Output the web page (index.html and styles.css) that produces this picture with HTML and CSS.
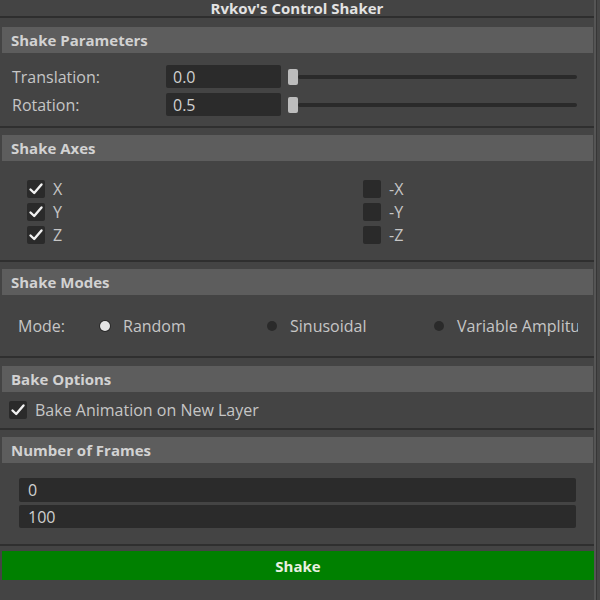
FILE: index.html
```html
<!DOCTYPE html>
<html lang="en">

<head>
  <meta charset="UTF-8" />
  <title>Rvkov's Control Shaker</title>
  <link rel="stylesheet" href="styles.css">
</head>

<body>
  <div class="window">
    <div class="panel">
      <div class="title">Rvkov's Control Shaker</div>

      <!-- shake parameters -->
      <div class="frame params">
        <div class="frame-head">Shake Parameters</div>
        <div class="frame-body">
          <div class="slider-row">
            <span class="label">Translation:</span>
            <div class="field">0.0</div>
            <div class="slider"><span class="thumb"></span><span class="track"></span></div>
          </div>
          <div class="slider-row">
            <span class="label">Rotation:</span>
            <div class="field">0.5</div>
            <div class="slider"><span class="thumb"></span><span class="track"></span></div>
          </div>
        </div>
      </div>

      <!-- axes -->
      <div class="frame axes">
        <div class="frame-head">Shake Axes</div>
        <div class="frame-body">
          <div class="axes-col">
            <label class="check on"><span class="box"></span>X</label>
            <label class="check on"><span class="box"></span>Y</label>
            <label class="check on"><span class="box"></span>Z</label>
          </div>
          <div class="axes-col">
            <label class="check"><span class="box"></span>-X</label>
            <label class="check"><span class="box"></span>-Y</label>
            <label class="check"><span class="box"></span>-Z</label>
          </div>
        </div>
      </div>

      <!-- modes -->
      <div class="frame modes">
        <div class="frame-head">Shake Modes</div>
        <div class="frame-body">
          <span class="mode-label">Mode:</span>
          <span class="radio on"><span class="dot"></span>Random</span>
          <span class="radio"><span class="dot"></span>Sinusoidal</span>
          <span class="radio"><span class="dot"></span>Variable Amplitude</span>
        </div>
      </div>

      <!-- bake -->
      <div class="frame bake">
        <div class="frame-head">Bake Options</div>
        <div class="frame-body">
          <label class="check on"><span class="box"></span>Bake Animation on New Layer</label>
        </div>
      </div>

      <!-- frames -->
      <div class="frame frames">
        <div class="frame-head">Number of Frames</div>
        <div class="frame-body">
          <div class="field wide first">0</div>
          <div class="field wide">100</div>
        </div>
      </div>

      <button class="shake">Shake</button>
    </div>
    <div class="edge"></div>
  </div>
</body>

</html>
```

FILE: styles.css
```css
* {
  margin: 0;
  padding: 0;
  box-sizing: border-box;
}

body {
  background: #444;
  font-family: "Open Sans", "Noto Sans", sans-serif;
  color: #c6c6c6;
  font-size: 16px;
}

.window {
  display: flex;
  width: 600px;
  height: 600px;
}

.panel {
  width: 594px;
}

.edge {
  flex: 1;
  border-left: 2px solid #555;
  background: #474747;
  box-shadow: inset 1px 0 0 #363636;
}

.title {
  height: 18px;
  line-height: 16px;
  text-align: center;
  font-weight: bold;
  color: #e2e2e2;
  font-size: 15px;
  border-bottom: 2px solid #2e2e2e;
}

.frame {
  border-bottom: 2px solid #2f2f2f;
  margin-top: 7px;
}

.frame-head {
  height: 26px;
  line-height: 26px;
  margin: 0 1px 0 2px;
  padding-left: 9px;
  background: #5d5d5d;
  font-weight: bold;
  font-size: 15px;
  color: #d2d2d2;
}

.params {
  margin-top: 9px;
}

.params .frame-body {
  padding: 12px 0 10px 12px;
}

.slider-row {
  display: flex;
  align-items: center;
  height: 23px;
}

.slider-row + .slider-row {
  margin-top: 5px;
}

.label {
  width: 154px;
}

.field {
  background: #2b2b2b;
  border-radius: 2px;
  color: #d0d0d0;
}

.slider-row .field {
  width: 115px;
  height: 23px;
  line-height: 24px;
  padding-left: 7px;
}

.slider {
  display: flex;
  align-items: center;
  margin-left: 7px;
  width: 289px;
}

.slider .thumb {
  width: 10px;
  height: 16px;
  border-radius: 2px;
  background: #bdbdbd;
}

.slider .track {
  flex: 1;
  height: 4px;
  border-radius: 2px;
  background: #2a2a2a;
}

/* checkboxes */
.check {
  display: flex;
  align-items: center;
  height: 23px;
}

.check .box {
  width: 18px;
  height: 18px;
  border-radius: 2px;
  background: #2a2a2a;
  margin-right: 8px;
}

.check.on .box {
  background: #2a2a2a url("data:image/svg+xml,%3Csvg xmlns='http://www.w3.org/2000/svg' viewBox='0 0 18 18'%3E%3Cpath d='M3.5 9.5 L7.2 13 L14.5 4.5' fill='none' stroke='%23f2f2f2' stroke-width='2.4' stroke-linecap='round' stroke-linejoin='round'/%3E%3C/svg%3E") center / 18px 18px no-repeat;
}

.axes .frame-body {
  display: flex;
  padding: 16px 0 14px 27px;
}

.axes-col {
  flex: none;
  width: 336px;
}

.axes-col + .axes-col {
  width: auto;
}

/* radios */
.modes .frame-body {
  display: flex;
  align-items: center;
  height: 61px;
  padding-left: 18px;
  overflow: hidden;
  width: 578px;
  white-space: nowrap;
}

.mode-label {
  flex: none;
  width: 82px;
}

.radio {
  flex: none;
  display: flex;
  align-items: center;
  width: 167px;
}

.radio:last-child {
  width: auto;
}

.radio .dot {
  width: 10px;
  height: 10px;
  border-radius: 50%;
  background: #2a2a2a;
  margin-right: 13px;
}

.radio.on .dot {
  background: #e4e4e4;
  box-shadow: 0 0 0 1px #2a2a2a;
}

.bake {
  margin-top: 8px;
}

.bake .frame-body {
  padding: 6px 0 6px 9px;
}

.bake .check {
  height: 24px;
}

.frames .frame-body {
  padding: 15px 18px 16px 19px;
}

.field.wide {
  height: 23px;
  line-height: 24px;
  padding-left: 9px;
}

.field.wide.first {
  height: 24px;
  margin-bottom: 3px;
}

.shake {
  display: block;
  width: 592px;
  height: 29px;
  margin: 5px 0 0 2px;
  border: none;
  background: #008000;
  color: #e8f0e0;
  font: bold 15px "Open Sans", "Noto Sans", sans-serif;
}
```
